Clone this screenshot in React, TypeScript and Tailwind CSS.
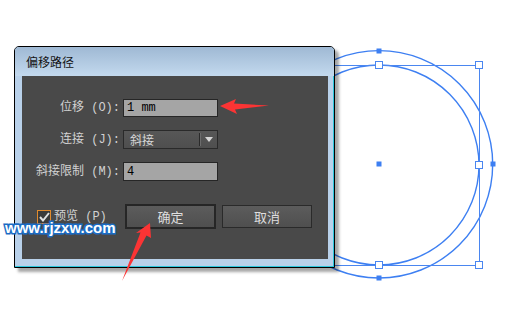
import React from "react";

const Canvas = () => (
  <svg className="absolute left-0 top-0" width="523" height="328" viewBox="0 0 523 328">
    <circle cx="379" cy="164.3" r="113.7" fill="none" stroke="#3d7ff2" strokeWidth="1.4" />
    <circle cx="379" cy="165" r="100" fill="none" stroke="#3d7ff2" strokeWidth="1.4" />
    <rect x="279.5" y="65.5" width="200" height="200" fill="none" stroke="#4a86f0" strokeWidth="1" />
    {[
      [379, 65],
      [479, 65],
      [479, 165],
      [479, 265],
      [379, 265],
    ].map(([x, y]) => (
      <rect key={`${x}-${y}`} x={x - 3.5} y={y - 3.5} width="7" height="7" fill="#fff" stroke="#4a86f0" strokeWidth="1" />
    ))}
    {[
      [379, 51],
      [493, 164],
      [379, 278],
      [379, 164],
    ].map(([x, y]) => (
      <rect key={`f${x}-${y}`} x={x - 2.5} y={y - 2.5} width="5" height="5" fill="#3d7ff2" />
    ))}
  </svg>
);

const Arrows = () => (
  <svg className="absolute left-0 top-0 pointer-events-none" width="523" height="328" viewBox="0 0 523 328">
    <polygon points="220,106 236,99 234,103.5 269,105.5 235,109.5 237,114" fill="#fb3434" />
    <polygon points="150,223 151,238 146.5,235.5 122,281 140.5,232.5 136,233" fill="#fb3434" />
  </svg>
);

const labelCls =
  "text-right text-[12px] text-[#d2d2d2] font-['Liberation_Mono','Noto_Sans_CJK_SC',monospace] leading-none self-center";

export default function App() {
  return (
    <div className="relative w-[523px] h-[328px] bg-white overflow-hidden font-['Noto_Sans_CJK_SC',sans-serif]">
      <Canvas />

      <div className="absolute left-[14px] top-[46px] w-[321px] h-[222px] flex flex-col border border-black rounded-t-[5px] bg-[#b9d1ea] shadow-[4px_4px_3px_rgba(0,0,0,0.35)]">
        <div className="h-[29px] shrink-0 flex items-center px-[11px] rounded-t-[4px] bg-gradient-to-b from-[#9fb9d4] to-[#c3d9ee] text-[12px] text-[#141414]">
          偏移路径
        </div>
        <div className="flex-1 flex pl-[7px] pr-[5px] pb-[7px] border-r border-b border-[#2bc6dc]">
          <div className="w-[306px] h-[183px] bg-[#494949] pt-[23px]">
            <div className="grid grid-cols-[98px_95px] gap-x-[3px] gap-y-[13px]">
              <span className={labelCls}>位移 (O):</span>
              <div className="h-[18px] bg-[#a5a5a5] border border-[#262626] flex items-center pl-[3px] text-[12px] text-black font-['Liberation_Mono',monospace]">
                1 mm
              </div>

              <span className={labelCls}>连接 (J):</span>
              <div className="h-[19px] bg-gradient-to-b from-[#575757] to-[#4f4f4f] border border-[#2a2a2a] flex items-center text-[12px] text-[#d8d8d8]">
                <span className="flex-1 pl-[6px]">斜接</span>
                <span className="w-px h-[13px] bg-[#2a2a2a]" />
                <span className="w-px h-[13px] bg-[#6c6c6c]" />
                <span className="w-[16px] flex justify-center">
                  <svg width="8" height="5" viewBox="0 0 8 5">
                    <polygon points="0,0 8,0 4,5" fill="#d6d6d6" />
                  </svg>
                </span>
              </div>

              <span className={labelCls}>斜接限制 (M):</span>
              <div className="h-[19px] bg-[#a5a5a5] border border-[#262626] flex items-center pl-[3px] text-[12px] text-black font-['Liberation_Mono',monospace]">
                4
              </div>
            </div>

            <div className="flex items-center mt-[23px] pl-[15px]">
              <div className="w-[88px] flex items-center gap-[3px]">
                <span className="w-[14px] h-[14px] border border-[#e28b2c] bg-[#3b3b3b] flex items-center justify-center">
                  <svg width="11" height="10" viewBox="0 0 11 10">
                    <path d="M1 5 L4 8.5 L10 1" fill="none" stroke="#e2e2e2" strokeWidth="2" />
                  </svg>
                </span>
                <span className="text-[12px] text-[#d2d2d2] font-['Liberation_Mono','Noto_Sans_CJK_SC',monospace]">
                  预览 (P)
                </span>
              </div>
              <button className="w-[91px] h-[25px] border-2 border-[#262626] bg-gradient-to-b from-[#5c5c5c] to-[#4f4f4f] text-[13px] text-[#dedede] flex items-center justify-center">
                确定
              </button>
              <button className="ml-[6px] w-[90px] h-[23px] border border-[#2a2a2a] bg-gradient-to-b from-[#5c5c5c] to-[#4f4f4f] text-[13px] text-[#dedede] flex items-center justify-center">
                取消
              </button>
            </div>
          </div>
        </div>
      </div>

      <div className="absolute left-[5px] top-[220px] text-[15px] font-bold leading-none text-white font-['Liberation_Sans',sans-serif] [-webkit-text-stroke:3px_#1b6cc4] [paint-order:stroke_fill]">
        www.rjzxw.com
      </div>

      <Arrows />
    </div>
  );
}
